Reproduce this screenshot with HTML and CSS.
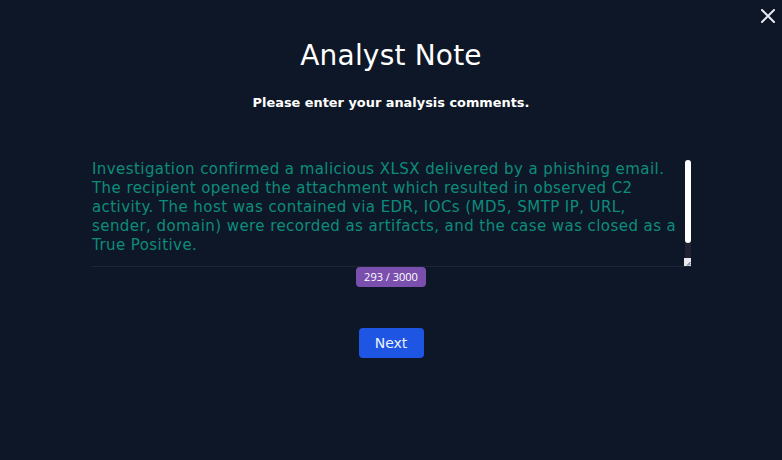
FILE: index.html
```html
<!DOCTYPE html>
<html lang="en">
<head>
<meta charset="utf-8">
<title>Analyst Note</title>
<link rel="stylesheet" href="styles.css">
</head>
<body>
<div class="modal">
  <button class="close" aria-label="Close">
    <svg width="14" height="14" viewBox="0 0 14 14"><path d="M1 1L13 13M13 1L1 13" stroke="#e6e9ef" stroke-width="2" stroke-linecap="square"/></svg>
  </button>
  <h1 class="title">Analyst Note</h1>
  <p class="subtitle">Please enter your analysis comments.</p>
  <div class="field">
    <div class="note-box">
      <textarea class="note">Investigation confirmed a malicious XLSX delivered by a phishing email. The recipient opened the attachment which resulted in observed C2 activity. The host was contained via EDR, IOCs (MD5, SMTP IP, URL, sender, domain) were recorded as artifacts, and the case was closed as a True Positive.</textarea>
      <div class="scroll-track"><div class="scroll-thumb"></div></div>
      <div class="resizer">
        <svg width="5" height="5" viewBox="0 0 5 5"><path d="M4.5 1L1 4.5M4.5 3L3 4.5" stroke="#3a3f4f" stroke-width="0.9"/></svg>
      </div>
    </div>
    <span class="counter">293 / 3000</span>
  </div>
  <button class="next">Next</button>
</div>
</body>
</html>
```
FILE: styles.css
```css
html, body {
  margin: 0;
  height: 100%;
  background: #0e1727;
}
body {
  font-family: "DejaVu Sans", "Open Sans", sans-serif;
  color: #ffffff;
}
.modal {
  position: relative;
  height: 100%;
  display: flex;
  flex-direction: column;
  align-items: center;
}
.close {
  position: absolute;
  top: 9px;
  right: 7px;
  background: none;
  border: 0;
  padding: 0;
  width: 14px;
  height: 14px;
  cursor: pointer;
}
.close svg { display: block; }
.title {
  margin: 38px 0 0;
  font-size: 28px;
  font-weight: 400;
  line-height: 36px;
  letter-spacing: 0.2px;
}
.subtitle {
  margin: 20px 0 0;
  font-size: 12.9px;
  font-weight: 700;
  line-height: 18px;
}
.field {
  margin-top: 48px;
  width: 600px;
  display: flex;
  flex-direction: column;
  align-items: center;
}
.note-box {
  position: relative;
  width: 600px;
  height: 106px;
  border-bottom: 1px solid #1d2637;
}
.note {
  display: block;
  box-sizing: border-box;
  width: 100%;
  height: 100%;
  margin: 0;
  padding: 0 10px 0 1px;
  background: transparent;
  border: 0;
  color: #0d8c7b;
  font-family: "DejaVu Sans", sans-serif;
  font-size: 15px;
  letter-spacing: 0.43px;
  line-height: 19px;
  outline: none;
  overflow: hidden;
  resize: none;
}
.scroll-track {
  position: absolute;
  top: 0;
  right: 0;
  bottom: 8px;
  width: 6px;
  background: #242232;
}
.scroll-thumb {
  height: 83px;
  background: #ffffff;
  border-radius: 3px;
}
.resizer {
  position: absolute;
  right: 0;
  bottom: 0;
  width: 7px;
  height: 8px;
  background: #e9eaee;
  display: flex;
  align-items: flex-end;
  justify-content: flex-end;
}
.resizer svg { display: block; }
.counter {
  margin-top: 0;
  background: #7a4fae;
  color: #fff;
  font-family: "Open Sans", sans-serif;
  font-size: 11px;
  line-height: 20px;
  height: 20px;
  padding: 0 8px;
  border-radius: 4px;
}
.next {
  margin-top: 41px;
  width: 65px;
  height: 30px;
  background: #1e55e3;
  color: #eef2ff;
  border: 0;
  border-radius: 4px;
  font-family: "DejaVu Sans", sans-serif;
  font-size: 14px;
  cursor: pointer;
}
```
